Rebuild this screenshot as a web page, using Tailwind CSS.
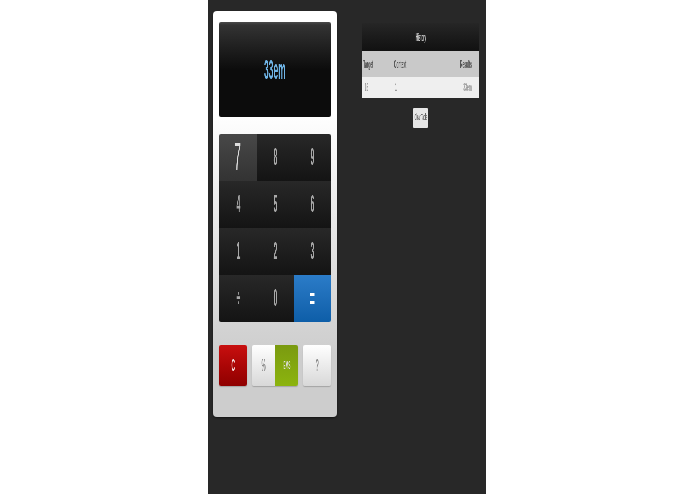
<!DOCTYPE html>
<html><head><meta charset="utf-8"><script src="https://cdn.jsdelivr.net/npm/@tailwindcss/browser@4"></script></head>
<body class="bg-white font-['Liberation_Sans',sans-serif]">
<div class="flex justify-start w-[695px] h-[494px] overflow-hidden">
<div class="w-[208px] shrink-0"></div>
<div class="w-[278px] h-[494px] bg-[#282828] flex items-start pl-[5px] pt-[11px]">
  <div class="w-[124px] h-[406px] rounded-[4px] bg-gradient-to-b from-white from-25% to-[#cdcdcd] to-85% px-[6px] pt-[11px] flex flex-col shadow-[0_1px_2px_rgba(0,0,0,0.5)]">
    <div class="h-[95px] rounded-[2px] bg-[linear-gradient(#4a4a4a_0,#333_3px,#0c0c0c_50%,#0c0c0c_100%)] flex items-start pt-[33px] justify-center">
      <span class="text-[#6fb4e6] font-bold text-[28px] leading-[30px] scale-x-[0.3] whitespace-nowrap will-change-transform">33em</span>
    </div>
    <div class="mt-[17px] h-[188px] rounded-[2px] overflow-hidden grid grid-cols-[38px_37px_37px] grid-rows-4 text-[#a8a8a8] font-bold text-[23px]">
      <div class="bg-gradient-to-b from-[#484848] to-[#333] flex items-center justify-center text-[#ddd]"><span class="text-[38px] font-normal scale-x-[0.33] will-change-transform">7</span></div>
      <div class="bg-gradient-to-b from-[#282828] to-[#141414] flex items-center justify-center"><span class="scale-x-[0.3] will-change-transform">8</span></div>
      <div class="bg-gradient-to-b from-[#282828] to-[#141414] flex items-center justify-center"><span class="scale-x-[0.3] will-change-transform">9</span></div>
      <div class="bg-gradient-to-b from-[#282828] to-[#141414] flex items-center justify-center"><span class="scale-x-[0.3] will-change-transform">4</span></div>
      <div class="bg-gradient-to-b from-[#282828] to-[#141414] flex items-center justify-center"><span class="scale-x-[0.3] will-change-transform">5</span></div>
      <div class="bg-gradient-to-b from-[#282828] to-[#141414] flex items-center justify-center"><span class="scale-x-[0.3] will-change-transform">6</span></div>
      <div class="bg-gradient-to-b from-[#282828] to-[#141414] flex items-center justify-center"><span class="scale-x-[0.3] will-change-transform">1</span></div>
      <div class="bg-gradient-to-b from-[#282828] to-[#141414] flex items-center justify-center"><span class="scale-x-[0.3] will-change-transform">2</span></div>
      <div class="bg-gradient-to-b from-[#282828] to-[#141414] flex items-center justify-center"><span class="scale-x-[0.3] will-change-transform">3</span></div>
      <div class="bg-gradient-to-b from-[#282828] to-[#141414] flex items-center justify-center"><span class="scale-x-[0.3] will-change-transform">÷</span></div>
      <div class="bg-gradient-to-b from-[#282828] to-[#141414] flex items-center justify-center"><span class="scale-x-[0.3] will-change-transform">0</span></div>
      <div class="bg-gradient-to-b from-[#2b7cc8] to-[#0d5ea8] flex items-center justify-center text-white font-bold text-[28px]"><span class="scale-x-[0.33] will-change-transform">=</span></div>
    </div>
    <div class="mt-[23px] h-[41px] flex justify-between text-[17px] font-bold">
      <div class="w-[28px] rounded-[2px] bg-gradient-to-b from-[#c80f0f] to-[#8f0000] text-[#f4dddd] flex items-center justify-center shadow-[0_1px_1px_rgba(0,0,0,0.2)]"><span class="scale-x-[0.3] will-change-transform">C</span></div>
      <div class="w-[46px] flex rounded-[2px] overflow-hidden shadow-[0_1px_1px_rgba(0,0,0,0.2)]">
        <div class="w-[23px] bg-gradient-to-b from-white to-[#d8d8d8] text-[#888] flex items-center justify-center"><span class="scale-x-[0.28] will-change-transform">%</span></div>
        <div class="w-[23px] bg-gradient-to-b from-[#7a9a10] to-[#8cb40e] text-[#ddd] text-[11px] flex items-center justify-center"><span class="scale-x-[0.3] will-change-transform">EMS</span></div>
      </div>
      <div class="w-[28px] rounded-[2px] bg-gradient-to-b from-white to-[#d8d8d8] text-[#888] flex items-center justify-center shadow-[0_1px_1px_rgba(0,0,0,0.2)]"><span class="scale-x-[0.33] will-change-transform">?</span></div>
    </div>
  </div>
  <div class="ml-[25px] w-[117px] mt-[12px] flex flex-col items-center">
    <div class="w-full h-[28px] bg-gradient-to-b from-[#262626] to-[#111] text-[#ccc] text-[11px] font-bold flex items-center justify-center"><span class="scale-x-[0.27] will-change-transform">History</span></div>
    <div class="w-full h-[26px] bg-[#c9c9c9] text-[#555] text-[10px] font-bold grid grid-cols-[32px_66px_19px] items-center"><span class="origin-left pl-[4px] scale-x-[0.33] will-change-transform">Target</span><span class="origin-left scale-x-[0.33] will-change-transform">Context</span><span class="origin-left scale-x-[0.33] will-change-transform">Results</span></div>
    <div class="w-full h-[21px] bg-[#efefef] text-[#999] text-[10px] font-bold grid grid-cols-[32px_66px_19px] items-center"><span class="origin-left pl-[8px] scale-x-[0.33] will-change-transform">16</span><span class="origin-left pl-[3px] scale-x-[0.33] will-change-transform">1</span><span class="origin-left pl-[10px] scale-x-[0.33] whitespace-nowrap will-change-transform">33em</span></div>
    <div class="mt-[10px] w-[15px] h-[20px] bg-[#e6e6e6] rounded-[1px] text-[#666] text-[9px] font-bold flex items-center justify-center whitespace-nowrap"><span class="scale-x-[0.26] shrink-0 will-change-transform">Clear Table</span></div>
  </div>
</div>
</div>
</body></html>
